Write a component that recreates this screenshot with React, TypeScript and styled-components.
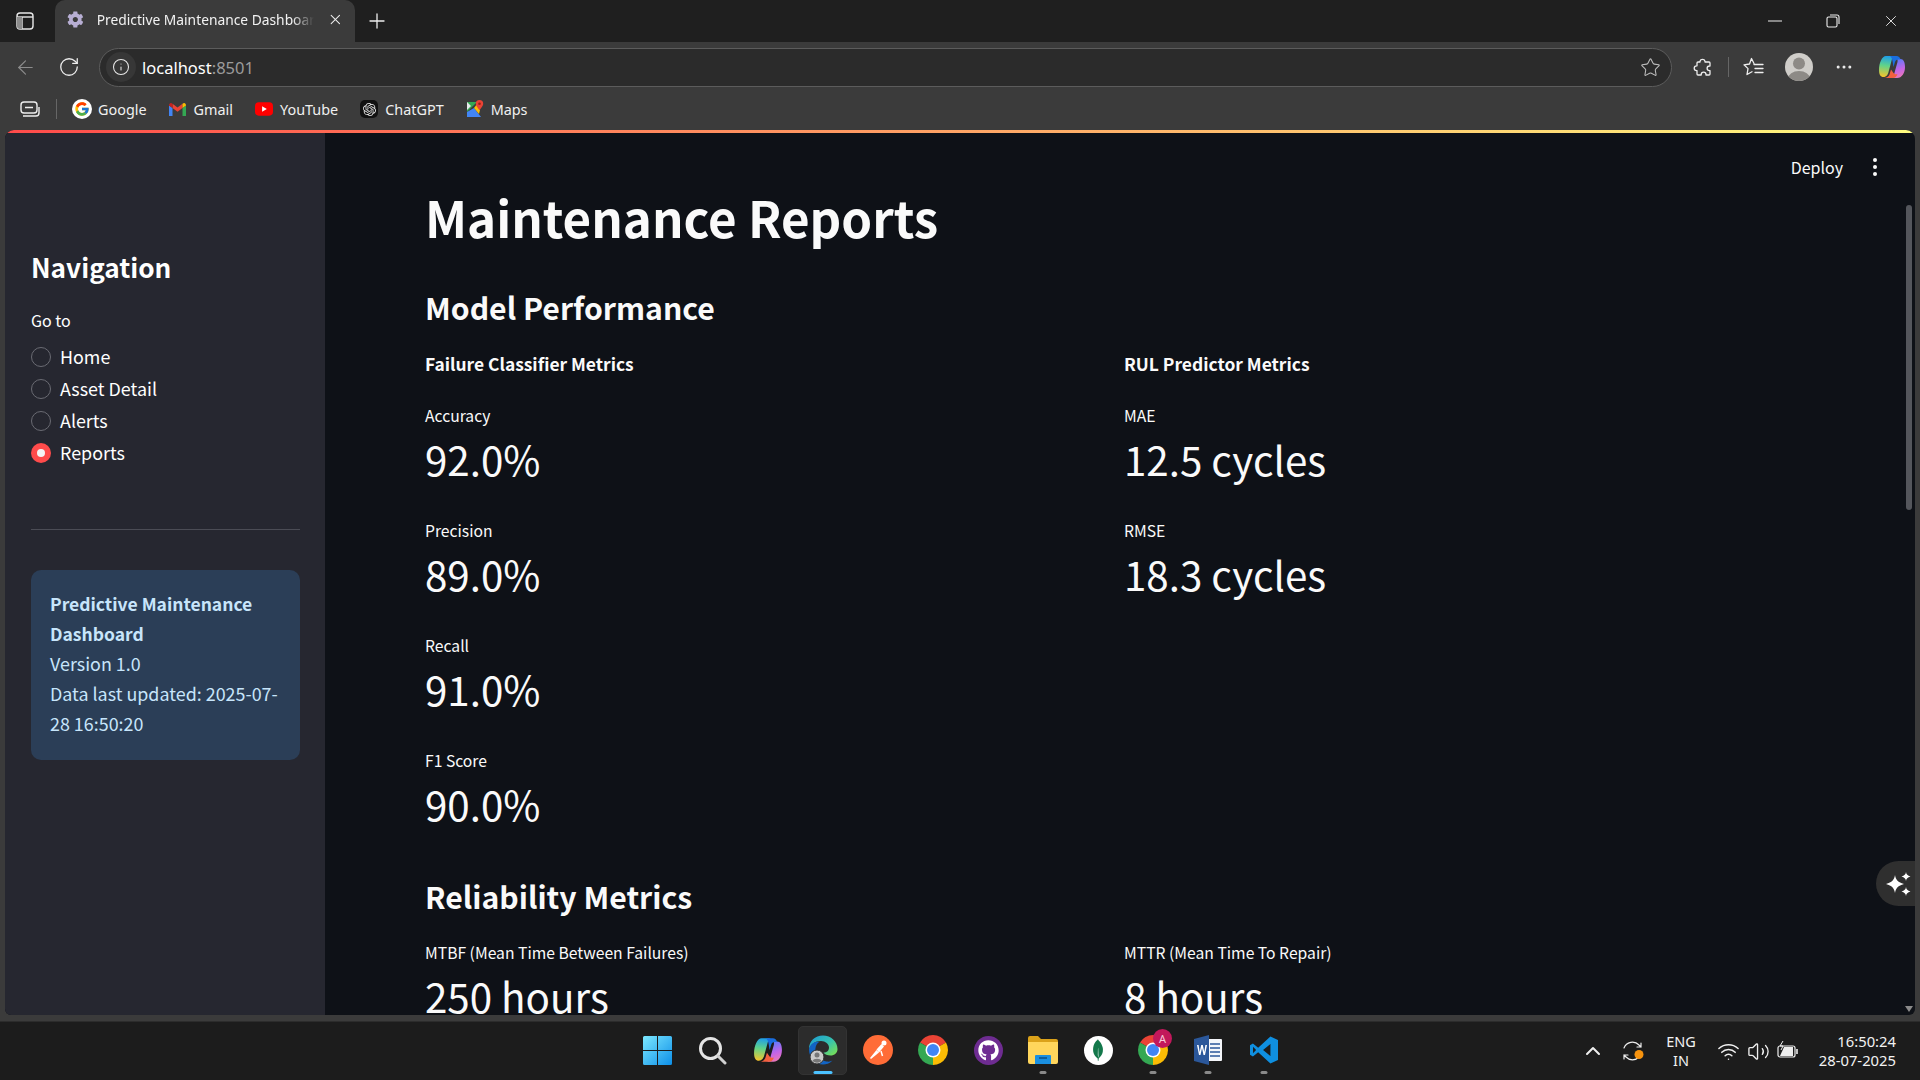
import React from "react";
import styled, { createGlobalStyle } from "styled-components";
import { ArrowLeft, ChevronUp, Info, MoreHorizontal, Plus, RotateCw, Star, Volume2, Wifi, X } from "lucide-react";
import { FaCog, FaGithub } from "react-icons/fa";
import { FcGoogle } from "react-icons/fc";
import { SiMongodb, SiOpenai } from "react-icons/si";

const CHROME_FONT = `"Noto Sans", sans-serif`;
const PAGE_FONT = `"Noto Sans CJK SC", "Noto Sans", sans-serif`;

const GlobalStyle = createGlobalStyle`
  html, body {
    margin: 0;
    padding: 0;
    background: #3b3b3b;
  }
  * {
    box-sizing: border-box;
  }
`;

const Screen = styled.div`
  width: 1920px;
  height: 1080px;
  display: flex;
  flex-direction: column;
  overflow: hidden;
  background: #3b3b3b;
  color: #fff;
  font-family: ${CHROME_FONT};
`;

/* browser chrome */
const TabStrip = styled.div`
  height: 42px;
  display: flex;
  align-items: center;
  background: #1f1f1f;
`;

const SquareButton = styled.div<{ $w?: number }>`
  width: ${(p) => p.$w ?? 44}px;
  height: 40px;
  flex: none;
  display: flex;
  align-items: center;
  justify-content: center;
`;

const Tab = styled.div`
  width: 300px;
  height: 42px;
  margin-left: 6px;
  padding: 0 11px 3px 12px;
  display: flex;
  align-items: center;
  gap: 13px;
  background: #3b3b3b;
  border-radius: 10px 10px 0 0;
  font-size: 13.8px;
  position: relative;
  white-space: nowrap;
`;

const TabTitle = styled.span`
  width: 222px;
  overflow: hidden;
  color: #f2f2f2;
  -webkit-mask-image: linear-gradient(90deg, #000 90%, transparent);
  mask-image: linear-gradient(90deg, #000 90%, transparent);
`;

const WindowControls = styled.div`
  margin-left: auto;
  display: flex;
`;

const NavRow = styled.div`
  height: 50px;
  padding-left: 3px;
  display: flex;
  align-items: center;
`;

const AddressBar = styled.div`
  width: 1573px;
  height: 39px;
  margin-left: 8px;
  padding: 0 10px 0 6px;
  display: flex;
  align-items: center;
  background: #2b2b2b;
  border: 1px solid #5c5c5c;
  border-radius: 20px;
  font-size: 16.5px;
`;

const InfoBubble = styled.div`
  width: 30px;
  height: 30px;
  margin-right: 6px;
  display: flex;
  align-items: center;
  justify-content: center;
  background: #373737;
  border-radius: 50%;
`;

const Port = styled.span`
  color: #9b9b9b;
`;

const AddressEnd = styled.div`
  margin-left: auto;
  display: flex;
`;

const ToolGroup = styled.div`
  margin-left: 8px;
  display: flex;
  align-items: center;
`;

const ToolDivider = styled.div`
  width: 1px;
  height: 20px;
  margin: 0 2px;
  background: #666;
  flex: none;
`;

const BookmarksBar = styled.div`
  height: 38px;
  padding: 0 0 4px 20px;
  display: flex;
  align-items: center;
  gap: 22px;
  font-size: 14.4px;
`;

const BookmarkLead = styled.div`
  width: 39px;
  height: 20px;
  margin-right: -9px;
  display: flex;
  align-items: center;
  justify-content: space-between;
`;

const Bookmark = styled.div`
  display: flex;
  align-items: center;
  gap: 7px;
  color: #f0f0f0;
  white-space: nowrap;
`;

const BookmarkIcon = styled.div`
  width: 18px;
  height: 18px;
  flex: none;
  display: flex;
  align-items: center;
  justify-content: center;
`;

const GoogleTile = styled(BookmarkIcon)`
  width: 20px;
  height: 20px;
  margin-right: -1px;
  background: #fff;
  border-radius: 50%;
`;

const ChatGptTile = styled(BookmarkIcon)`
  background: #111;
  border-radius: 5px;
`;

/* streamlit page */
const PageFrame = styled.div`
  height: 885px;
  margin: 0 5px;
  display: flex;
  position: relative;
  overflow: hidden;
  background: #0e1117;
  border-radius: 9px 9px 6px 6px;
  font-family: ${PAGE_FONT};
`;

const Decoration = styled.div`
  position: absolute;
  top: 0;
  left: 0;
  right: 0;
  height: 3px;
  background: linear-gradient(90deg, #ff4b4b, #fffd80);
  z-index: 2;
`;

const Sidebar = styled.aside`
  width: 320px;
  flex: none;
  padding: 112px 25px 0 26px;
  background: #262730;
`;

const SidebarTitle = styled.h2`
  margin: 0;
  font-size: 26.2px;
  font-weight: 700;
  line-height: 51px;
`;

const RadioCaption = styled.div`
  margin-top: 15px;
  font-size: 16px;
  line-height: 24px;
`;

const RadioList = styled.div`
  margin-top: 8px;
  display: flex;
  flex-direction: column;
`;

const RadioRow = styled.div`
  height: 32px;
  display: flex;
  align-items: center;
  gap: 9px;
  font-size: 17.9px;
`;

const RadioDot = styled.span<{ $on?: boolean }>`
  width: 20px;
  height: 20px;
  margin-top: 2px;
  border-radius: 50%;
  display: flex;
  align-items: center;
  justify-content: center;
  background: ${(p) => (p.$on ? "#ff4b4b" : "transparent")};
  border: ${(p) => (p.$on ? "none" : "1px solid #6a6b73")};

  &::after {
    content: "";
    display: ${(p) => (p.$on ? "block" : "none")};
    width: 8px;
    height: 8px;
    border-radius: 50%;
    background: #f5f5f5;
  }
`;

const SideRule = styled.hr`
  margin: 61px 0 40px;
  border: none;
  border-top: 1px solid #4b4c55;
`;

const InfoCard = styled.div`
  height: 190px;
  padding: 18px 19px;
  background: #2b3e57;
  border-radius: 10px;
  color: #c7e5fb;
  font-size: 17.9px;
  line-height: 30px;

  strong {
    font-size: 17.5px;
    line-height: 1;
  }
`;

const Main = styled.main`
  flex: 1;
  padding: 57px 0 0 100px;
  overflow: hidden;
`;

const PageTitle = styled.h1`
  margin: 0;
  font-size: 49.3px;
  font-weight: 700;
  line-height: 60px;
  color: #fafafa;
`;

const SectionTitle = styled.h2<{ $top: number }>`
  margin: ${(p) => p.$top}px 0 0;
  font-size: 30.2px;
  font-weight: 600;
  line-height: 44px;
  color: #fafafa;
`;

const MetricGrid = styled.div<{ $top: number }>`
  width: 1378px;
  margin-top: ${(p) => p.$top}px;
  display: grid;
  grid-template-columns: 1fr 1fr;
  column-gap: 20px;
`;

const MetricColumn = styled.div`
  display: flex;
  flex-direction: column;
`;

const ColumnHeading = styled.h4`
  margin: 0 0 27px;
  font-size: 17.4px;
  font-weight: 700;
  line-height: 26px;
  color: #fafafa;
`;

const MetricStack = styled.div`
  display: flex;
  flex-direction: column;
  gap: 30px;
`;

const MetricLabel = styled.div`
  font-size: 15.7px;
  line-height: 24px;
  color: #fafafa;
`;

const MetricValue = styled.div`
  font-size: 40.3px;
  line-height: 61px;
  color: #fafafa;
`;

const Toolbar = styled.div`
  position: absolute;
  top: 19px;
  right: 32px;
  height: 36px;
  display: flex;
  align-items: center;
  gap: 24px;
  font-size: 16px;
  color: #fafafa;
`;

const Kebab = styled.span`
  width: 16px;
  display: flex;
  flex-direction: column;
  align-items: center;
  gap: 3px;

  i {
    width: 4px;
    height: 4px;
    border-radius: 50%;
    background: #fafafa;
  }
`;

const ScrollThumb = styled.div`
  position: absolute;
  top: 75px;
  right: 3px;
  width: 6px;
  height: 305px;
  background: #54565c;
  border-radius: 3px;
`;

const ScrollArrow = styled.div`
  position: absolute;
  right: 2px;
  bottom: 3px;
  width: 0;
  height: 0;
  border-left: 4px solid transparent;
  border-right: 4px solid transparent;
  border-top: 6px solid #8a8a8a;
`;

const AssistPill = styled.div`
  position: absolute;
  right: 0;
  top: 731px;
  width: 39px;
  height: 45px;
  display: flex;
  align-items: center;
  padding-left: 10px;
  background: #2f2f2f;
  border-radius: 23px 0 0 23px;
`;

/* windows taskbar */
const Taskbar = styled.footer`
  height: 59px;
  margin-top: 6px;
  padding-right: 24px;
  display: flex;
  align-items: center;
  position: relative;
  background: #1c1c1c;
  border-top: 1px solid #2c2c2c;
`;

const TaskIcons = styled.div`
  position: absolute;
  left: 630px;
  top: 0;
  height: 58px;
  display: flex;
`;

const TaskSlot = styled.div<{ $active?: boolean; $mark?: "open" | "active" }>`
  width: 55.1px;
  height: 58px;
  padding-bottom: 2px;
  display: flex;
  align-items: center;
  justify-content: center;
  position: relative;

  &::before {
    content: "";
    display: ${(p) => (p.$active ? "block" : "none")};
    position: absolute;
    left: 3px;
    right: 3px;
    top: 4px;
    bottom: 5px;
    background: #2c2c2c;
    border: 1px solid #333;
    border-radius: 5px;
  }

  &::after {
    content: "";
    display: ${(p) => (p.$mark ? "block" : "none")};
    position: absolute;
    left: 50%;
    bottom: 6px;
    transform: translateX(-50%);
    width: ${(p) => (p.$mark === "active" ? 19 : 7)}px;
    height: 3px;
    border-radius: 2px;
    background: ${(p) => (p.$mark === "active" ? "#4cc2ff" : "#8a8a8a")};
  }

  svg {
    position: relative;
  }
`;

const Badge = styled.span`
  position: absolute;
  top: 7px;
  right: 9px;
  width: 19px;
  height: 19px;
  border-radius: 50%;
  background: #c2185b;
  color: #f7c9d8;
  font-size: 11px;
  display: flex;
  align-items: center;
  justify-content: center;
`;

const Tray = styled.div`
  margin-left: auto;
  display: flex;
  align-items: center;
  font-size: 14.5px;
  line-height: 19px;
  color: #f2f2f2;
`;

const TrayIcon = styled.div<{ $w: number; $gap?: number }>`
  width: ${(p) => p.$w}px;
  height: 30px;
  margin-right: ${(p) => p.$gap ?? 0}px;
  display: flex;
  align-items: center;
  justify-content: center;
`;

const LangBox = styled.div`
  width: 50px;
  margin: 0 7px 0 0;
  text-align: center;
`;

const Clock = styled.div`
  width: 90px;
  margin-left: 3px;
  font-size: 14.8px;
  text-align: right;
  white-space: nowrap;
`;

const GithubBubble = styled.div`
  width: 29px;
  height: 29px;
  display: flex;
  align-items: center;
  justify-content: center;
  border-radius: 50%;
  background: #6e2c91;
`;

const MongoBubble = styled(GithubBubble)`
  background: #fff;
`;

/* drawings */
const PanelGlyph = () => (
  <svg width="18" height="18" viewBox="0 0 18 18" fill="none" stroke="#e8e8e8" strokeWidth="1.4">
    <rect x="1" y="1" width="16" height="16" rx="3" />
    <path d="M1 5h16" />
    <path d="M6 5v12" />
    <path d="M1 5h5v12H4a3 3 0 0 1-3-3z" fill="#8b8b8b" stroke="none" />
  </svg>
);

const RestoreGlyph = () => (
  <svg width="14" height="14" viewBox="0 0 14 14" fill="none" stroke="#eee" strokeWidth="1.1">
    <rect x="1" y="3" width="10" height="10" rx="1.5" />
    <path d="M4 1h7a2 2 0 0 1 2 2v7" />
  </svg>
);

const PuzzleGlyph = () => (
  <svg width="20" height="20" viewBox="0 0 20 20" fill="none" stroke="#eee" strokeWidth="1.3" strokeLinejoin="round">
    <path d="M7 4.2a2.6 2.6 0 0 1 5 0V5h4a1 1 0 0 1 1 1v3h-.6a2.3 2.3 0 0 0 0 4.6h.6V17a1 1 0 0 1-1 1h-3v-.4a2.4 2.4 0 0 0-4.8 0v.4H5a1 1 0 0 1-1-1v-3.400h-.4a2.400 2.400 0 0 1 0-4.800H4V6a1 1 0 0 1 1-1h2z" />
  </svg>
);

const FavoritesGlyph = () => (
  <svg width="22" height="20" viewBox="0 0 22 20" fill="none" stroke="#eee" strokeWidth="1.3" strokeLinejoin="round" strokeLinecap="round">
    <path d="M11 6.500L8.500 1.500 6.500 7 1 7.800l4 3.800L4 17.500l5-2.700" />
    <path d="M11 7.500h9M12 11.500h8M12 15.500h8" />
  </svg>
);

const Avatar = () => (
  <svg width="28" height="28" viewBox="0 0 28 28">
    <defs>
      <clipPath id="avatar-clip">
        <circle cx="14" cy="14" r="14" />
      </clipPath>
    </defs>
    <circle cx="14" cy="14" r="14" fill="#cfcdc9" />
    <g clipPath="url(#avatar-clip)" fill="#8d8a86">
      <circle cx="14" cy="10.500" r="6" />
      <ellipse cx="14" cy="25.500" rx="11" ry="7.500" />
    </g>
  </svg>
);

const CopilotLogo = ({ size, id }: { size: number; id: string }) => (
  <svg width={size} height={size} viewBox="0 0 28 28">
    <defs>
      <linearGradient id={`${id}-a`} x1="0.4" y1="0" x2="0.3" y2="1">
        <stop offset="0" stopColor="#1f9ee8" />
        <stop offset="0.45" stopColor="#5fd38a" />
        <stop offset="1" stopColor="#f7c52b" />
      </linearGradient>
      <linearGradient id={`${id}-b`} x1="0.5" y1="0" x2="0.8" y2="1">
        <stop offset="0" stopColor="#5b7bfa" />
        <stop offset="0.55" stopColor="#c565e6" />
        <stop offset="1" stopColor="#f07ab0" />
      </linearGradient>
    </defs>
    <path d="M19 6h3.500C25.500 6 27 9 27 14c0 6-3 11-8 11h-7c2 0 3.500-1.500 4-3.500L19.500 9c.3-1.500 0-3-.5-3z" fill={`url(#${id}-b)`} />
    <path d="M8 3h9c-1.500 0-2.500 1-3 3l-3.500 13c-.600 2.500-2 5-5 5C2.500 24 1 21.500 1 17 1 10 4 3 8 3z" fill={`url(#${id}-a)`} />
    <path d="M12 3h6.500c2 0 3.500 1.500 4 3.500H20c-1.500 0-2.500 1-3 2.500l-1.500 5-1-6c-.3-2-1-4-2.500-5z" fill="#1a6ee0" />
    <path d="M6 25h9c2 0 3.700-1.300 4.500-4-1.500.5-3 .3-4-1l-2.500-3.500-1.500 5C10.500 23.500 9 25 6 25z" fill="#f3603f" />
  </svg>
);

const GmailLogo = () => (
  <svg width="17" height="13" viewBox="0 0 17 13">
    <path d="M0 2.500V13h3.500V5z" fill="#4285f4" />
    <path d="M13.500 5v8H17V2.500z" fill="#34a853" />
    <path d="M3.500 5l5 3.800 5-3.800V0.800L8.500 4.600 3.500 0.800z" fill="#ea4335" />
    <path d="M0 2.500L3.500 5V0.800L2.500 0.200C1.200-.3 0 .8 0 2.500z" fill="#c5221f" />
    <path d="M17 2.500L13.500 5V0.800L14.500 0.200C15.800-.3 17 .8 17 2.500z" fill="#fbbc04" />
  </svg>
);

const YoutubeLogo = () => (
  <svg width="19" height="14" viewBox="0 0 19 14">
    <rect width="19" height="14" rx="4" fill="#f00" />
    <path d="M7.500 4l5 3-5 3z" fill="#fff" />
  </svg>
);

const MapsLogo = () => (
  <svg width="18" height="18" viewBox="0 0 18 18">
    <path d="M1 2h10L1 12z" fill="#34a853" />
    <path d="M1 12L8 8l7 9H1z" fill="#4285f4" />
    <path d="M8 8l3-4 3 6-1 4z" fill="#fbbc04" />
    <path d="M1 2l4 4-4 4z" fill="#e8eaed" />
    <path d="M13.500 0a3.700 3.700 0 0 0-3.700 3.700c0 2.400 3.700 6.300 3.700 6.300s3.700-3.900 3.700-6.300A3.700 3.700 0 0 0 13.500 0z" fill="#ea4335" />
    <circle cx="13.500" cy="3.700" r="1.300" fill="#9c1f14" />
  </svg>
);

const WindowsLogo = () => (
  <svg width="29" height="29" viewBox="0 0 29 29">
    <defs>
      <linearGradient id="win-grad" x1="0" y1="0" x2="1" y2="1">
        <stop offset="0" stopColor="#7ce8ff" />
        <stop offset="1" stopColor="#0d8fe8" />
      </linearGradient>
    </defs>
    <path d="M0 1.500A1.500 1.500 0 0 1 1.500 0H14v14H0zM15 0h12.500A1.500 1.500 0 0 1 29 1.500V14H15zM0 15h14v14H1.500A1.500 1.500 0 0 1 0 27.500zM15 15h14v12.500a1.500 1.500 0 0 1-1.500 1.500H15z" fill="url(#win-grad)" />
  </svg>
);

const SearchLogo = () => (
  <svg width="29" height="29" viewBox="0 0 29 29" fill="none">
    <circle cx="12.500" cy="12.500" r="10" stroke="#e4e4e4" strokeWidth="3" />
    <path d="M20 20l7 7" stroke="#d0d0d0" strokeWidth="3" strokeLinecap="round" />
  </svg>
);

const EdgeLogo = () => (
  <svg width="30" height="30" viewBox="0 0 30 30">
    <defs>
      <linearGradient id="edge-g" x1="0" y1="0" x2="1" y2="0.9">
        <stop offset="0" stopColor="#1c9ad6" />
        <stop offset="0.55" stopColor="#35c1b0" />
        <stop offset="1" stopColor="#7be052" />
      </linearGradient>
    </defs>
    <path d="M1 14C1 6 7 0.500 15 0.500c8 0 14.500 6 14.500 13.500 0 4-3 6.500-7 6.500-3 0-6-1-7-3 3.500 0 5.500-2 5.500-5 0-3.500-3.500-6.500-8-6.500C7 6 3 9 1 14z" fill="url(#edge-g)" />
    <path d="M1 14c1.500-5 5.500-8 10-7-3 2-4 5.500-3.500 9 .8 5 5.500 9.500 11 10.500 2.500.4 4.500 0 6-1-3 3-6.500 4-9.500 4C7 29.500 1 23 1 14z" fill="#1264c4" />
    <circle cx="9" cy="22" r="7" fill="#c9c9c9" stroke="#2c2c2c" />
    <circle cx="9" cy="20" r="2.500" fill="#777" />
    <path d="M4.500 26c1-3 8-3 9 0a7 7 0 0 1-9 0z" fill="#777" />
  </svg>
);

const PostmanLogo = () => (
  <svg width="30" height="30" viewBox="0 0 30 30">
    <circle cx="15" cy="15" r="15" fill="#ff6c37" />
    <path d="M7 23l6.500-8 2.500 2.500-8 6.500z" fill="#fff" />
    <path d="M13.500 14.500l5-5.500 2.500 2.500-5 6z" fill="#fff" />
    <circle cx="21" cy="8" r="2.500" fill="#fff" />
    <path d="M18 16l1.500 5" stroke="#fff" strokeWidth="1.500" />
  </svg>
);

const ChromeLogo = ({ size = 30 }: { size?: number }) => (
  <svg width={size} height={size} viewBox="0 0 40 40">
    <path d="M20 20L2.700 10A20 20 0 0 1 37.300 10z" fill="#ea4335" />
    <path d="M20 20L2.700 10A20 20 0 0 0 20 40z" fill="#34a853" />
    <path d="M20 20L37.300 10A20 20 0 0 1 20 40z" fill="#fbbc04" />
    <circle cx="20" cy="20" r="10" fill="#fff" />
    <circle cx="20" cy="20" r="8" fill="#4285f4" />
  </svg>
);

const FolderLogo = () => (
  <svg width="30" height="28" viewBox="0 0 30 28">
    <path d="M0 2a2 2 0 0 1 2-2h8l3 3h15a2 2 0 0 1 2 2v3H0z" fill="#dba21a" />
    <path d="M0 6h30v20a2 2 0 0 1-2 2H2a2 2 0 0 1-2-2z" fill="#ffd65c" />
    <path d="M8 19h14a1 1 0 0 1 1 1v8H7v-8a1 1 0 0 1 1-1z" fill="#1a8fe0" />
    <path d="M11 22h8" stroke="#0b4f87" strokeWidth="1.500" />
  </svg>
);

const WordLogo = () => (
  <svg width="28" height="30" viewBox="0 0 28 30">
    <rect x="7" y="4" width="21" height="22" rx="1" fill="#f4f6fa" />
    <path d="M16 9h10M16 13h10M16 17h10M16 21h10" stroke="#2b579a" strokeWidth="1.600" />
    <path d="M0 4L15 0v30L0 26z" fill="#2b579a" />
    <path d="M3 10l2 10h1.500L8 13l1.500 7H11l2-10h-1.600l-1.100 7L8.800 10H7.200l-1.500 7-1.100-7z" fill="#fff" />
  </svg>
);

const VsCodeLogo = () => (
  <svg width="28" height="28" viewBox="0 0 24 24">
    <path
      fillRule="evenodd"
      d="M17.500 0.500L24 3.500V20.500L17.500 23.500L7 13.900L2.500 17.500L0 16V8L2.500 6.500L7 10.100zM17.500 6.800L11.200 12L17.500 17.200zM2.600 9.300V14.700L5.200 12z"
      fill="#0f8fe0"
    />
  </svg>
);

const SparkleGlyph = () => (
  <svg width="26" height="26" viewBox="0 0 26 26" fill="#fff">
    <path d="M9 4c.8 5 3 7.200 9 9-6 1.800-8.200 4-9 9-.8-5-3-7.200-9-9 6-1.800 8.200-4 9-9z" />
    <path d="M20 1c.4 2.500 1.500 3.600 4.500 4.500-3 .9-4.100 2-4.500 4.500-.4-2.500-1.500-3.600-4.500-4.500 3-.9 4.100-2 4.500-4.500z" />
    <path d="M20 16c.4 2.500 1.500 3.600 4.500 4.500-3 .9-4.100 2-4.500 4.500-.4-2.500-1.500-3.600-4.500-4.500 3-.9 4.100-2 4.500-4.500z" />
  </svg>
);

const SyncGlyph = () => (
  <svg width="24" height="24" viewBox="0 0 24 24" fill="none" stroke="#eee" strokeWidth="1.200" strokeLinecap="round">
    <path d="M3 9a9 9 0 0 1 15-3l2 2M20 4v4h-4" />
    <path d="M18 18a9 9 0 0 1-13 0l-2-2M3 20v-4h4" />
    <circle cx="18" cy="15.500" r="4.500" fill="#f7930e" stroke="none" />
  </svg>
);

const BatteryGlyph = () => (
  <svg width="22" height="20" viewBox="0 0 22 20" fill="none" stroke="#eee" strokeWidth="1.200">
    <rect x="1" y="5" width="17" height="11" rx="2" />
    <path d="M20 8v5" strokeWidth="1.600" />
    <path d="M3 15l4-9h9v9z" fill="#eee" stroke="none" />
    <path d="M6 0L3 5h3l-2 4" strokeWidth="1" />
  </svg>
);

const bookmarks = [
  { name: "Google", icon: <GoogleTile><FcGoogle size={16} /></GoogleTile> },
  { name: "Gmail", icon: <BookmarkIcon><GmailLogo /></BookmarkIcon> },
  { name: "YouTube", icon: <BookmarkIcon><YoutubeLogo /></BookmarkIcon> },
  { name: "ChatGPT", icon: <ChatGptTile><SiOpenai size={13} color="#e8e8e8" /></ChatGptTile> },
  { name: "Maps", icon: <BookmarkIcon><MapsLogo /></BookmarkIcon> },
];

const pages = ["Home", "Asset Detail", "Alerts", "Reports"];

const classifierMetrics = [
  { label: "Accuracy", value: "92.0%" },
  { label: "Precision", value: "89.0%" },
  { label: "Recall", value: "91.0%" },
  { label: "F1 Score", value: "90.0%" },
];

const rulMetrics = [
  { label: "MAE", value: "12.5 cycles" },
  { label: "RMSE", value: "18.3 cycles" },
];

const reliabilityMetrics = [
  { label: "MTBF (Mean Time Between Failures)", value: "250 hours" },
  { label: "MTTR (Mean Time To Repair)", value: "8 hours" },
];

const Metric = ({ label, value }: { label: string; value: string }) => (
  <div>
    <MetricLabel>{label}</MetricLabel>
    <MetricValue>{value}</MetricValue>
  </div>
);

const App: React.FC = () => {
  return (
    <Screen>
      <GlobalStyle />
      <TabStrip>
        <SquareButton $w={49}>
          <PanelGlyph />
        </SquareButton>
        <Tab>
          <FaCog size={17} color="#b7aed3" />
          <TabTitle>Predictive Maintenance Dashboard</TabTitle>
          <X size={17} strokeWidth={1.5} color="#eee" />
        </Tab>
        <SquareButton>
          <Plus size={24} strokeWidth={1.3} color="#eee" />
        </SquareButton>
        <WindowControls>
          <SquareButton $w={58}>
            <svg width="14" height="2" viewBox="0 0 14 2"><path d="M0 1h14" stroke="#eee" /></svg>
          </SquareButton>
          <SquareButton $w={58}>
            <RestoreGlyph />
          </SquareButton>
          <SquareButton $w={58}>
            <X size={18} strokeWidth={1.2} color="#eee" />
          </SquareButton>
        </WindowControls>
      </TabStrip>

      <NavRow>
        <SquareButton>
          <ArrowLeft size={23} strokeWidth={1.2} color="#8c8c8c" />
        </SquareButton>
        <SquareButton>
          <RotateCw size={22} strokeWidth={1.4} color="#eee" />
        </SquareButton>
        <AddressBar>
          <InfoBubble>
            <Info size={18} strokeWidth={1.4} color="#e8e8e8" />
          </InfoBubble>
          localhost<Port>:8501</Port>
          <AddressEnd>
            <Star size={21} strokeWidth={1.2} color="#bdbdbd" />
          </AddressEnd>
        </AddressBar>
        <ToolGroup>
          <SquareButton $w={46}><PuzzleGlyph /></SquareButton>
          <ToolDivider />
          <SquareButton $w={46}><FavoritesGlyph /></SquareButton>
          <SquareButton $w={44}><Avatar /></SquareButton>
          <SquareButton $w={46}><MoreHorizontal size={20} strokeWidth={1.6} color="#eee" /></SquareButton>
          <SquareButton $w={50}><CopilotLogo size={28} id="bar-copilot" /></SquareButton>
        </ToolGroup>
      </NavRow>

      <BookmarksBar>
        <BookmarkLead>
          <svg width="20" height="16" viewBox="0 0 20 16" fill="none" stroke="#eee" strokeWidth="1.400">
            <rect x="1" y="1" width="16" height="11" rx="3" />
            <path d="M5 6.500h8M3 15h13a3 3 0 0 0 3-3V6" />
          </svg>
          <ToolDivider />
        </BookmarkLead>
        {bookmarks.map((b) => (
          <Bookmark key={b.name}>
            {b.icon}
            {b.name}
          </Bookmark>
        ))}
      </BookmarksBar>

      <PageFrame>
        <Decoration />
        <Sidebar>
          <SidebarTitle>Navigation</SidebarTitle>
          <RadioCaption>Go to</RadioCaption>
          <RadioList>
            {pages.map((page) => (
              <RadioRow key={page}>
                <RadioDot $on={page === "Reports"} />
                {page}
              </RadioRow>
            ))}
          </RadioList>
          <SideRule />
          <InfoCard>
            <strong>Predictive Maintenance Dashboard</strong>
            <br />
            Version 1.0
            <br />
            Data last updated: 2025-07-28 16:50:20
          </InfoCard>
        </Sidebar>

        <Main>
          <PageTitle>Maintenance Reports</PageTitle>
          <SectionTitle $top={38}>Model Performance</SectionTitle>
          <MetricGrid $top={22}>
            <MetricColumn>
              <ColumnHeading>Failure Classifier Metrics</ColumnHeading>
              <MetricStack>
                {classifierMetrics.map((m) => (
                  <Metric key={m.label} {...m} />
                ))}
              </MetricStack>
            </MetricColumn>
            <MetricColumn>
              <ColumnHeading>RUL Predictor Metrics</ColumnHeading>
              <MetricStack>
                {rulMetrics.map((m) => (
                  <Metric key={m.label} {...m} />
                ))}
              </MetricStack>
            </MetricColumn>
          </MetricGrid>
          <SectionTitle $top={40}>Reliability Metrics</SectionTitle>
          <MetricGrid $top={23}>
            {reliabilityMetrics.map((m) => (
              <Metric key={m.label} {...m} />
            ))}
          </MetricGrid>
        </Main>

        <Toolbar>
          Deploy
          <Kebab>
            <i />
            <i />
            <i />
          </Kebab>
        </Toolbar>
        <ScrollThumb />
        <ScrollArrow />
        <AssistPill>
          <SparkleGlyph />
        </AssistPill>
      </PageFrame>

      <Taskbar>
        <TaskIcons>
          <TaskSlot><WindowsLogo /></TaskSlot>
          <TaskSlot><SearchLogo /></TaskSlot>
          <TaskSlot><CopilotLogo size={30} id="task-copilot" /></TaskSlot>
          <TaskSlot $active $mark="active"><EdgeLogo /></TaskSlot>
          <TaskSlot><PostmanLogo /></TaskSlot>
          <TaskSlot><ChromeLogo /></TaskSlot>
          <TaskSlot>
            <GithubBubble><FaGithub size={21} color="#fff" /></GithubBubble>
          </TaskSlot>
          <TaskSlot $mark="open"><FolderLogo /></TaskSlot>
          <TaskSlot>
            <MongoBubble><SiMongodb size={22} color="#13784b" /></MongoBubble>
          </TaskSlot>
          <TaskSlot $mark="open">
            <ChromeLogo />
            <Badge>A</Badge>
          </TaskSlot>
          <TaskSlot $mark="open"><WordLogo /></TaskSlot>
          <TaskSlot $mark="open"><VsCodeLogo /></TaskSlot>
        </TaskIcons>
        <Tray>
          <TrayIcon $w={30} $gap={10}><ChevronUp size={24} strokeWidth={2} color="#eee" /></TrayIcon>
          <TrayIcon $w={30} $gap={8}><SyncGlyph /></TrayIcon>
          <LangBox>
            ENG
            <br />
            IN
          </LangBox>
          <TrayIcon $w={30}><Wifi size={23} strokeWidth={1.6} color="#eee" /></TrayIcon>
          <TrayIcon $w={30}><Volume2 size={23} strokeWidth={1.4} color="#eee" /></TrayIcon>
          <TrayIcon $w={30}><BatteryGlyph /></TrayIcon>
          <Clock>
            16:50:24
            <br />
            28-07-2025
          </Clock>
        </Tray>
      </Taskbar>
    </Screen>
  );
};

export default App;
